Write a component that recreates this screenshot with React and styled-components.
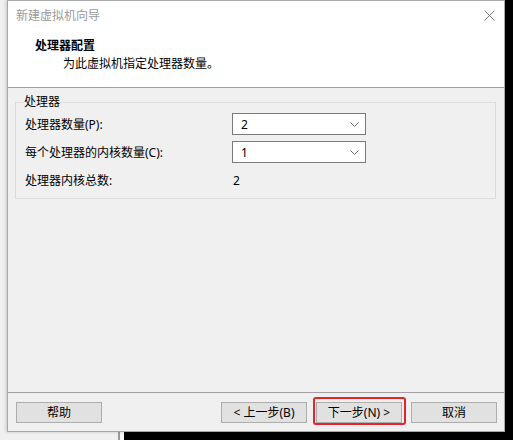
import React from 'react';
import styled, { createGlobalStyle } from 'styled-components';

const GlobalStyle = createGlobalStyle`
  html, body {
    margin: 0;
    padding: 0;
  }
  body {
    font-family: "Noto Sans", "Noto Sans CJK SC", sans-serif;
    font-size: 12px;
    color: #000;
  }
`;

const Desktop = styled.div`
  width: 513px;
  height: 440px;
  overflow: hidden;
  background: linear-gradient(to right, #f0f0f0 0 118px, #9a9a9a 118px 120px, #f7f7f7 120px 124px, #000 124px);
`;

const Dialog = styled.div`
  box-sizing: border-box;
  margin-left: 7px;
  width: 498px;
  height: 432px;
  display: flex;
  flex-direction: column;
  background: #f0f0f0;
  border: 1px solid #a8a8a8;
  box-shadow: -1px 0 3px rgba(0, 0, 0, 0.18);
`;

const TitleBar = styled.div`
  height: 29px;
  flex: none;
  display: flex;
  align-items: center;
  justify-content: space-between;
  padding: 0 9px 0 8px;
  background: #fff;
  color: #9a9a9a;
  line-height: 16px;
`;

const CloseButton = styled.div`
  width: 12px;
  height: 12px;
  display: flex;
  align-items: center;
  justify-content: center;
`;

const Header = styled.div`
  height: 58px;
  flex: none;
  box-sizing: border-box;
  padding: 7px 0 0 27px;
  background: #fff;
  border-bottom: 1px solid #a0a0a0;
`;

const HeaderTitle = styled.div`
  font-weight: 700;
  line-height: 18px;
`;

const HeaderText = styled.div`
  padding-left: 28px;
  line-height: 18px;
`;

const Body = styled.div`
  flex: 1;
  padding: 6px 8px 0 7px;
  border-bottom: 1px solid #a0a0a0;
`;

const Group = styled.fieldset`
  margin: 0;
  padding: 0 8px 4px 8px;
  border: 1px solid #dcdcdc;
  min-width: 0;
`;

const GroupLabel = styled.legend`
  padding: 0;
  line-height: 16px;
`;

const Row = styled.div`
  height: 28px;
  display: grid;
  grid-template-columns: 207px 134px;
  align-items: center;
  padding-left: 1px;
`;

const Value = styled.span`
  padding-left: 1px;
`;

const Select = styled.div`
  box-sizing: border-box;
  height: 22px;
  display: flex;
  align-items: center;
  justify-content: space-between;
  padding: 0 6px 0 8px;
  background: #fff;
  border: 1px solid #7a7a7a;
`;

const Footer = styled.div`
  height: 38px;
  flex: none;
  box-sizing: border-box;
  display: flex;
  align-items: flex-start;
  gap: 9px;
  padding: 9px 7px 0 8px;
`;

const Spacer = styled.div`
  flex: 1;
`;

const Button = styled.div`
  position: relative;
  box-sizing: border-box;
  width: 86px;
  height: 21px;
  display: flex;
  align-items: center;
  justify-content: center;
  background: #e1e1e1;
  border: 1px solid #adadad;
  line-height: 16px;
  margin-left: ${props => props.first ? '0' : '0'};

  ${props => props.marked && `
    &::after {
      content: '';
      position: absolute;
      top: -6px;
      left: -4px;
      right: -5px;
      bottom: -3px;
      border: 2px solid #e3242b;
      border-radius: 3px;
    }
  `}
`;

const Chevron = () => (
  <svg width="9" height="5" viewBox="0 0 9 5">
    <polyline points="0.5,0.5 4.5,4.5 8.5,0.5" fill="none" stroke="#6b6b6b" strokeWidth="1" />
  </svg>
);

const CloseIcon = () => (
  <svg width="11" height="11" viewBox="0 0 11 11">
    <path d="M0.5 0.5 L10.5 10.5 M10.5 0.5 L0.5 10.5" stroke="#7a7a7a" strokeWidth="1" />
  </svg>
);

const rows = [
  { label: '处理器数量(P):', value: '2', select: true },
  { label: '每个处理器的内核数量(C):', value: '1', select: true },
  { label: '处理器内核总数:', value: '2', select: false },
];

const App = () => {
  return (
    <Desktop>
      <GlobalStyle />
      <Dialog>
        <TitleBar>
          <span>新建虚拟机向导</span>
          <CloseButton><CloseIcon /></CloseButton>
        </TitleBar>
        <Header>
          <HeaderTitle>处理器配置</HeaderTitle>
          <HeaderText>为此虚拟机指定处理器数量。</HeaderText>
        </Header>
        <Body>
          <Group>
            <GroupLabel>处理器</GroupLabel>
            {rows.map(r => (
              <Row key={r.label}>
                <span>{r.label}</span>
                {r.select
                  ? <Select><span>{r.value}</span><Chevron /></Select>
                  : <Value>{r.value}</Value>}
              </Row>
            ))}
          </Group>
        </Body>
        <Footer>
          <Button>帮助</Button>
          <Spacer />
          <Button>&lt; 上一步(B)</Button>
          <Button marked>下一步(N) &gt;</Button>
          <Button>取消</Button>
        </Footer>
      </Dialog>
    </Desktop>
  );
};

export default App;
